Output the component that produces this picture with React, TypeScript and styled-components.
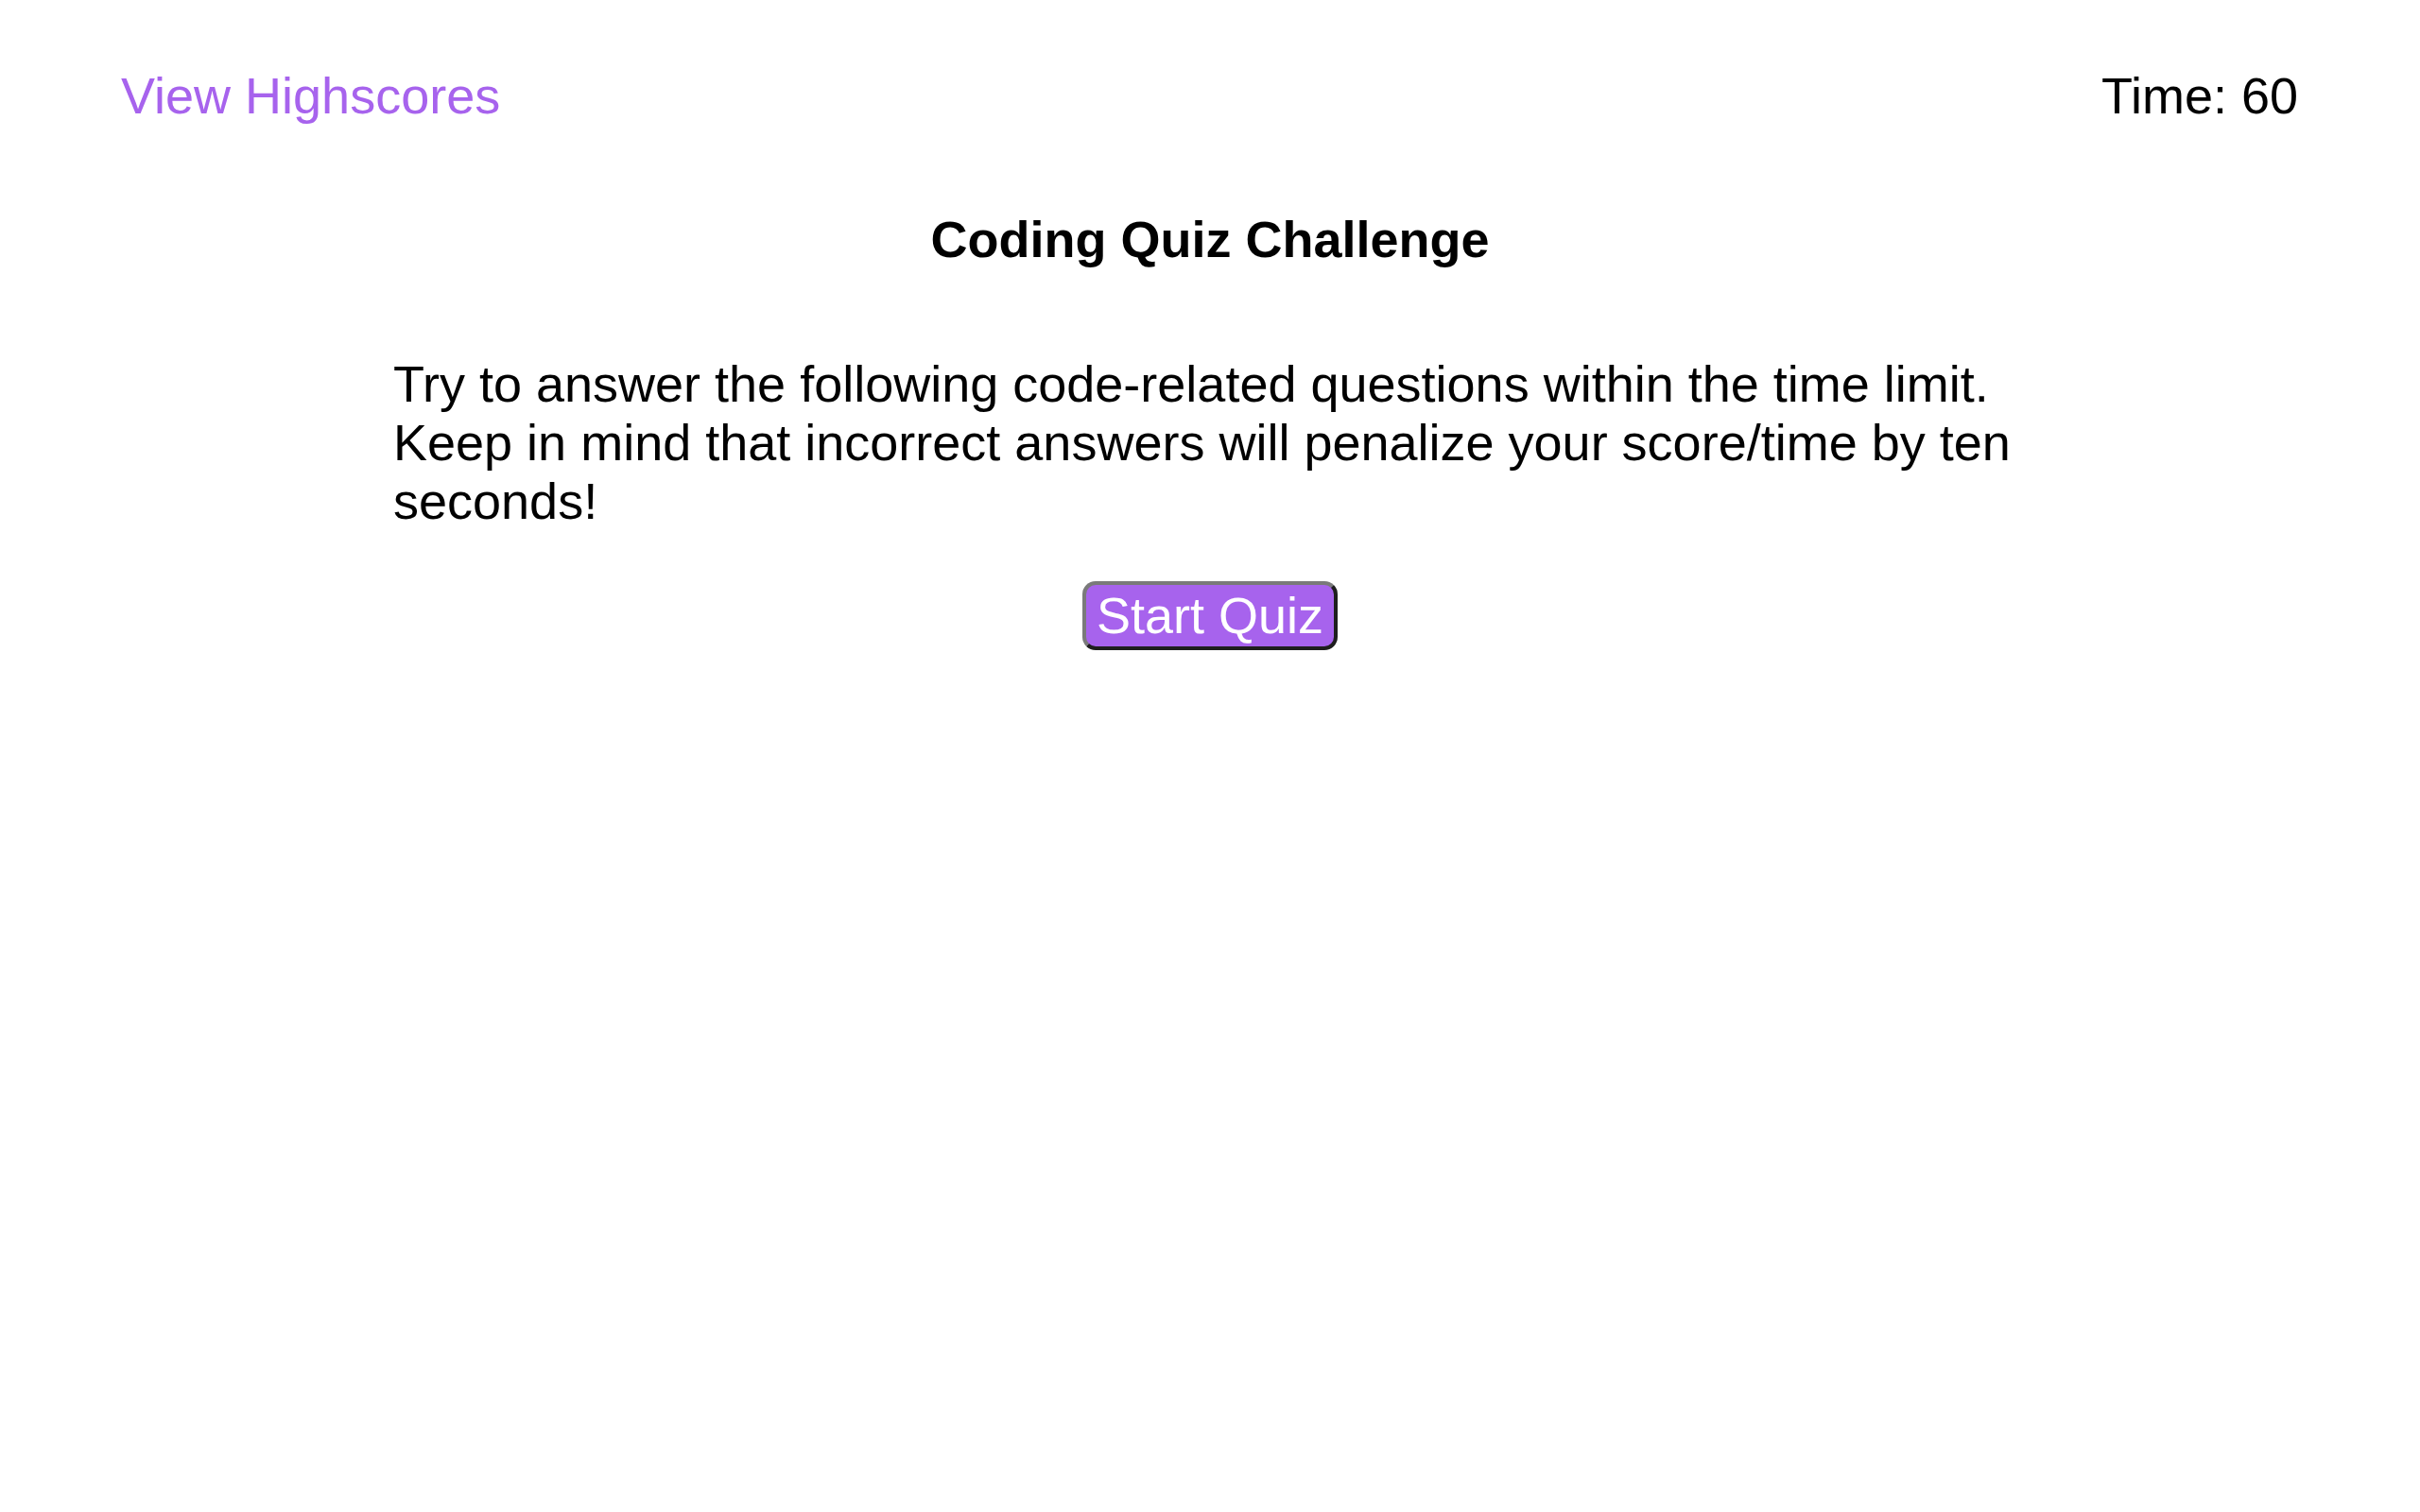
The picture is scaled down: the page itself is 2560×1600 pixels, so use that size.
import React from "react";
import styled, { createGlobalStyle } from "styled-components";

const GlobalStyle = createGlobalStyle`
  html, body {
    margin: 0;
    padding: 0;
    background: #ffffff;
  }
  body {
    font-family: "Liberation Sans", Arial, sans-serif;
    color: #000000;
  }
`;

const Page = styled.div`
  min-height: 1600px;
  display: flex;
  flex-direction: column;
`;

const TopBar = styled.header`
  display: flex;
  justify-content: space-between;
  align-items: flex-start;
  padding: 70px 129px 0 128px;
  font-size: 54px;
  line-height: 62px;
`;

const HighscoresLink = styled.a`
  color: #a763ed;
  text-decoration: none;
  cursor: pointer;
`;

const Timer = styled.div`
  color: #000000;
`;

const Main = styled.main`
  width: 1728px;
  margin: 90px auto 0;
  display: flex;
  flex-direction: column;
  align-items: center;
`;

const Title = styled.h1`
  margin: 0;
  font-size: 54px;
  line-height: 62px;
  font-weight: 700;
  text-align: center;
`;

const Intro = styled.p`
  align-self: stretch;
  margin: 91px 0 0;
  font-size: 54px;
  line-height: 62px;
  text-align: left;
`;

const StartButton = styled.button`
  margin-top: 54px;
  font-family: "Liberation Sans", Arial, sans-serif;
  font-size: 54px;
  line-height: 62px;
  color: #ffffff;
  background: #a763ed;
  padding: 1px 11px 2px;
  border-style: solid;
  border-width: 4px;
  border-color: #7a7a7a #1e1e1e #1e1e1e #7a7a7a;
  border-radius: 14px;
  cursor: pointer;
`;

export default function App() {
  return (
    <Page>
      <GlobalStyle />
      <TopBar>
        <HighscoresLink>View Highscores</HighscoresLink>
        <Timer>Time: 60</Timer>
      </TopBar>
      <Main>
        <Title>Coding Quiz Challenge</Title>
        <Intro>
          Try to answer the following code-related questions within the time limit.
          Keep in mind that incorrect answers will penalize your score/time by ten
          seconds!
        </Intro>
        <StartButton>Start Quiz</StartButton>
      </Main>
    </Page>
  );
}
